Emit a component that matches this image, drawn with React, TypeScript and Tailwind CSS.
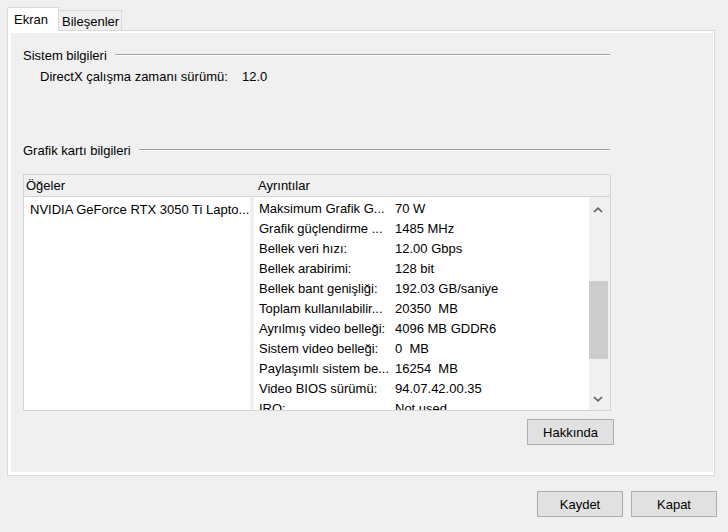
const details: [string, string][] = [
  ["Maksimum Grafik G...", "70 W"],
  ["Grafik güçlendirme ...", "1485 MHz"],
  ["Bellek veri hızı:", "12.00 Gbps"],
  ["Bellek arabirimi:", "128 bit"],
  ["Bellek bant genişliği:", "192.03 GB/saniye"],
  ["Toplam kullanılabilir...", "20350  MB"],
  ["Ayrılmış video belleği:", "4096 MB GDDR6"],
  ["Sistem video belleği:", "0  MB"],
  ["Paylaşımlı sistem be...", "16254  MB"],
  ["Video BIOS sürümü:", "94.07.42.00.35"],
  ["IRQ:", "Not used"],
];

function GroupTitle({ label }: { label: string }) {
  return (
    <div className="flex items-center h-[20px] pl-[12px] pr-[103px]">
      <span className="whitespace-nowrap">{label}</span>
      <div className="flex-1 ml-[8px] h-0 border-t border-b border-t-[#a0a0a0] border-b-white" />
    </div>
  );
}

function Chevron({ up }: { up?: boolean }) {
  return (
    <svg width="10" height="6" viewBox="0 0 10 6" className="block">
      <polyline
        points={up ? "1,5 5,1.2 9,5" : "1,1 5,4.8 9,1"}
        fill="none"
        stroke="#606060"
        strokeWidth="1.7"
      />
    </svg>
  );
}

function WinButton({ label, width }: { label: string; width: string }) {
  return (
    <button
      className={`${width} h-[26px] border border-[#adadad] bg-[#e1e1e1] text-black flex items-center justify-center`}
    >
      {label}
    </button>
  );
}

export default function App() {
  return (
    <div className="w-[728px] h-[532px] bg-[#f0f0f0] pt-[7px] pl-[7px] pr-[11px] flex flex-col text-[13px] leading-none text-black font-['Liberation_Sans',Arial,sans-serif] overflow-hidden">
      {/* Tabs */}
      <div className="flex items-end h-[23px]">
        <div className="relative z-10 -mb-px h-[24px] w-[52px] bg-white border border-b-0 border-[#d9d9d9] flex items-center pl-[6px]">
          Ekran
        </div>
        <div className="h-[20px] w-[63px] border-t border-r border-[#d9d9d9] bg-[#f0f0f0] flex items-center pl-[3px] pt-[1px]">
          Bileşenler
        </div>
      </div>

      {/* Tab page */}
      <div className="w-[708px] h-[446px] border border-[#d9d9d9] bg-white flex flex-col">
        <div className="flex-1 mt-[2px] ml-[3px] mr-px mb-[3px] bg-[#f0f0f0] flex flex-col">
          <div className="mt-[12px]">
            <GroupTitle label="Sistem bilgileri" />
          </div>
          <div className="mt-[1px] h-[20px] pl-[29px] flex items-center">
            <span className="w-[202px]">DirectX çalışma zamanı sürümü:</span>
            <span>12.0</span>
          </div>

          <div className="mt-[54px]">
            <GroupTitle label="Grafik kartı bilgileri" />
          </div>

          {/* List views */}
          <div className="mt-[14px] ml-[12px] w-[588px] h-[237px] border border-[#d5d5d5] flex flex-col">
            <div className="h-[22px] border-b border-[#d5d5d5] flex items-center shrink-0">
              <span className="w-[234px] pl-[2px]">Öğeler</span>
              <span>Ayrıntılar</span>
            </div>
            <div className="flex h-[213px]">
              <div className="w-[226px] bg-white pt-[2px] pl-[6px]">
                <div className="h-[20px] flex items-center whitespace-nowrap">
                  NVIDIA GeForce RTX 3050 Ti Lapto...
                </div>
              </div>
              <div className="w-[4px]" />
              <div className="w-[335px] bg-white pt-[1px] overflow-hidden">
                {details.map(([label, value]) => (
                  <div key={label} className="h-[20px] flex items-center pl-[5px] whitespace-pre">
                    <span className="w-[136px] shrink-0">{label}</span>
                    <span>{value}</span>
                  </div>
                ))}
              </div>
              <div className="w-[21px] flex flex-col">
                <div className="h-[24px] flex items-center justify-center pr-[3px] pt-[1px]">
                  <Chevron up />
                </div>
                <div className="h-[60px]" />
                <div className="h-[78px] w-[19px] bg-[#cdcdcd]" />
                <div className="flex-1" />
                <div className="h-[24px] flex items-center justify-center pr-[3px] pt-[1px]">
                  <Chevron />
                </div>
              </div>
            </div>
          </div>

          <div className="mt-[8px] self-end mr-[99px]">
            <WinButton label="Hakkında" width="w-[87px]" />
          </div>
        </div>
      </div>

      {/* Dialog buttons */}
      <div className="mt-[15px] flex justify-end gap-[8px]">
        <WinButton label="Kaydet" width="w-[86px]" />
        <WinButton label="Kapat" width="w-[86px]" />
      </div>
    </div>
  );
}
